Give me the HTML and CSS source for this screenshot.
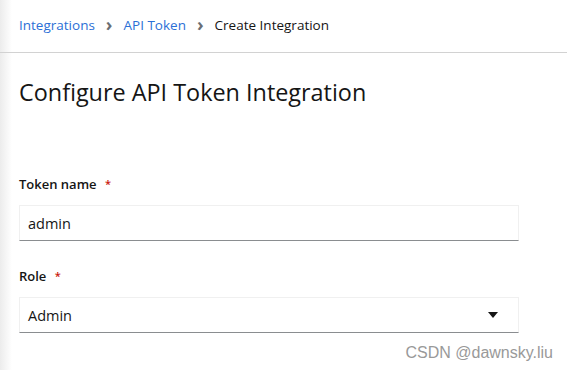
FILE: index.html
```html
<!DOCTYPE html>
<html lang="en">
<head>
  <meta charset="UTF-8">
  <meta name="viewport" content="width=device-width, initial-scale=1.0">
  <title>Create Integration</title>
  <link rel="stylesheet" href="styles.css">
</head>
<body>
  <div class="page">
    <nav class="breadcrumb">
      <a href="#">Integrations</a>
      <span class="sep">&#8250;</span>
      <a href="#">API Token</a>
      <span class="sep">&#8250;</span>
      <span class="current">Create Integration</span>
    </nav>
    <main class="content">
      <h1>Configure API Token Integration</h1>
      <form class="form">
        <div class="group">
          <label for="name">Token name <span class="req">*</span></label>
          <input type="text" id="name" value="admin">
        </div>
        <div class="group">
          <label for="role">Role <span class="req">*</span></label>
          <div class="select" id="role">
            <span>Admin</span>
            <svg width="10" height="6" viewBox="0 0 10 6"><path d="M0 0h10L5 6z" fill="#151515"/></svg>
          </div>
        </div>
      </form>
    </main>
    <div class="watermark">CSDN @dawnsky.liu</div>
  </div>
</body>
</html>
```

FILE: styles.css
```css
body {
  margin: 0;
  font-family: "Open Sans", Arial, sans-serif;
  color: #151515;
  background: #fff;
}
.page {
  position: relative;
  height: 370px;
  overflow: hidden;
  background: linear-gradient(to right, #ececec, #fff 12px);
}
.breadcrumb {
  display: flex;
  align-items: center;
  box-sizing: border-box;
  height: 53px;
  padding: 0 19px 2px;
  font-size: 13.5px;
  border-bottom: 1px solid #d2d2d2;
}
.breadcrumb a {
  color: #2b6fd6;
  text-decoration: none;
}
.breadcrumb .sep {
  color: #6a6e73;
  font-size: 18px;
  font-weight: bold;
  margin: -3px 11px 0;
}
.current {
  color: #151515;
}
.content {
  padding: 0 19px;
}
h1 {
  margin: 24px 0 0;
  font-size: 23.4px;
  font-weight: 400;
  line-height: 30px;
}
.form {
  margin-top: 68px;
  width: 500px;
}
.group {
  margin-bottom: 26px;
}
label {
  display: block;
  font-size: 13px;
  font-weight: 600;
  line-height: 18px;
  margin-bottom: 12px;
}
.req {
  color: #c9190b;
  font-size: 11px;
  margin-left: 5px;
  vertical-align: top;
}
input, .select {
  box-sizing: border-box;
  width: 100%;
  height: 36px;
  padding: 0 8px;
  font-family: inherit;
  font-size: 14.5px;
  color: #151515;
  border: 1px solid #f0f0f0;
  border-bottom-color: #8a8d90;
  background: #fff;
}
.select {
  display: flex;
  align-items: center;
  justify-content: space-between;
  padding-right: 20px;
}
.watermark {
  position: absolute;
  right: 14px;
  bottom: 8px;
  font-family: "Liberation Sans", Arial, sans-serif;
  font-size: 16px;
  color: #999;
}
```
